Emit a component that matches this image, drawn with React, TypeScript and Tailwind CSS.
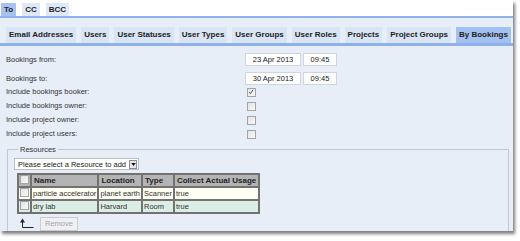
import React from 'react'

const topTabs = ['To', 'CC', 'BCC']
const subTabs = [
  'Email Addresses',
  'Users',
  'User Statuses',
  'User Types',
  'User Groups',
  'User Roles',
  'Projects',
  'Project Groups',
  'By Bookings',
]

const resources = [
  { name: 'particle accelerator', location: 'planet earth', type: 'Scanner', usage: 'true' },
  { name: 'dry lab', location: 'Harvard', type: 'Room', usage: 'true' },
]

const Check = ({ checked = false }: { checked?: boolean }) => (
  <span className="relative inline-block w-[9px] h-[9px] border border-[#a4a4a4] bg-gradient-to-br from-[#e4e4e4] to-[#f8f8f8]">
    {checked && (
      <svg viewBox="0 0 9 9" className="absolute inset-0 w-[7px] h-[7px]">
        <path d="M1.5 4 L3.2 6 L6.5 1" fill="none" stroke="#3c4a60" strokeWidth="1.2" />
      </svg>
    )}
  </span>
)

const Field = ({ value, w }: { value: string; w: string }) => (
  <div className={`${w} h-[13px] bg-white border border-[#d2d6dc] flex items-center justify-center text-[7.5px] text-[#222]`}>
    {value}
  </div>
)

export default function App() {
  const selected = 'By Bookings'
  return (
    <div className="w-[520px] h-[241px] bg-white font-['Liberation_Sans',Arial,sans-serif] text-[#333]">
      <div className="w-[513px] bg-[#e7eef8] shadow-[2px_3px_3px_rgba(0,0,0,0.5)]">
        {/* address tabs */}
        <div className="h-[16px] bg-white flex items-end gap-[6px] pl-[1px]">
          {topTabs.map(t => (
            <div
              key={t}
              className={`h-[13px] px-[3px] flex items-center text-[8px] font-bold text-[#222] ${
                t === 'To' ? 'bg-[#a6c3f0]' : 'bg-[#dfe8f6]'
              }`}
            >
              {t}
            </div>
          ))}
        </div>
        <div className="h-[2px] bg-[#8eb1ec]" />
        <div className="h-[9px]" />

        {/* category tabs */}
        <div className="h-[16px] flex items-stretch gap-[5px] pl-[6px]">
          {subTabs.map(t => (
            <div
              key={t}
              className={`px-[3px] flex items-center text-[8px] font-bold text-[#222] whitespace-nowrap ${
                t === selected ? 'bg-[#a3c1f0]' : 'bg-[#d9e5f5]'
              }`}
            >
              {t}
            </div>
          ))}
        </div>
        <div className="h-[3px] bg-[#8eb1ec]" />

        {/* content */}
        <div className="h-[185px] overflow-hidden pl-[6px] pr-[4px] pt-[7px] text-[7.5px]">
          <div className="flex items-center h-[13px]">
            <div className="w-[239px]">Bookings from:</div>
            <Field value="23 Apr 2013" w="w-[56px]" />
            <div className="w-[2px]" />
            <Field value="09:45" w="w-[34px]" />
          </div>
          <div className="flex items-center h-[13px] mt-[6px]">
            <div className="w-[239px]">Bookings to:</div>
            <Field value="30 Apr 2013" w="w-[56px]" />
            <div className="w-[2px]" />
            <Field value="09:45" w="w-[34px]" />
          </div>
          {[
            ['Include bookings booker:', true],
            ['Include bookings owner:', false],
            ['Include project owner:', false],
            ['Include project users:', false],
          ].map(([label, checked]) => (
            <div key={label as string} className="flex items-center h-[14px]">
              <div className="w-[241px]">{label as string}</div>
              <Check checked={checked as boolean} />
            </div>
          ))}

          <fieldset className="mt-[3px] ml-[1px] border border-[#c3c7ce] pl-[6px] h-[90px]">
            <legend className="ml-[4px] px-[2px] text-[#333]">Resources</legend>
            <div className="mt-[3px] w-[125px] h-[12px] bg-white border border-[#b9bdc4] flex items-center justify-between pl-[3px] pr-[1px]">
              <span className="text-[#222]">Please select a Resource to add</span>
              <span className="w-[8px] h-[9px] border border-[#8c8c8c] bg-[#e6e6e6] flex items-center justify-center">
                <svg viewBox="0 0 6 4" className="w-[5px] h-[3px]">
                  <path d="M0 0 H6 L3 4 Z" fill="#111" />
                </svg>
              </span>
            </div>

            <table className="mt-[3px] ml-[3px] border-separate border-spacing-[2px] bg-[#727272] text-[7.5px] leading-none">
              <thead>
                <tr className="h-[10px]">
                  <th className="bg-[#b4b4b4] w-[11px] px-[1px]">
                    <Check />
                  </th>
                  <th className="bg-[#b4b4b4] text-left text-[8px] text-[#222] px-[2px]">Name</th>
                  <th className="bg-[#b4b4b4] text-left text-[8px] text-[#222] px-[2px]">Location</th>
                  <th className="bg-[#b4b4b4] text-left text-[8px] text-[#222] px-[2px]">Type</th>
                  <th className="bg-[#b4b4b4] text-left text-[8px] text-[#222] px-[2px]">Collect Actual Usage</th>
                </tr>
              </thead>
              <tbody>
                {resources.map((r, i) => {
                  const bg = i === 0 ? 'bg-[#fefef2]' : 'bg-[#dcede6]'
                  return (
                    <tr key={r.name} className="h-[11px]">
                      <td className={`${bg} px-[1px]`}>
                        <Check />
                      </td>
                      <td className={`${bg} px-[1px] text-[#333] whitespace-nowrap`}>{r.name}</td>
                      <td className={`${bg} px-[1px] text-[#333] whitespace-nowrap`}>{r.location}</td>
                      <td className={`${bg} px-[1px] text-[#333]`}>{r.type}</td>
                      <td className={`${bg} px-[1px] text-[#333]`}>{r.usage}</td>
                    </tr>
                  )
                })}
              </tbody>
            </table>

            <div className="flex items-end mt-[3px] ml-[6px] gap-[6px]">
              <svg viewBox="0 0 14 11" className="w-[14px] h-[11px] mb-[2px]">
                <path d="M2.5 1.5 V9.5 H13.5" fill="none" stroke="#222" strokeWidth="1" />
                <path d="M0 4.5 L2.5 0.5 L5 4.5 Z" fill="#222" />
              </svg>
              <div className="h-[14px] px-[4px] flex items-center bg-[#eef0f3] border border-[#c9ccd1] text-[#a3a6aa]">
                Remove
              </div>
            </div>
          </fieldset>
        </div>
      </div>
    </div>
  )
}
